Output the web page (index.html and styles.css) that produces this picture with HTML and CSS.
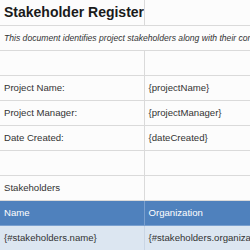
FILE: index.html
```html
<!DOCTYPE html>
<html>
<head>
<meta charset="utf-8">
<link rel="stylesheet" href="styles.css">
</head>
<body>
<table class="sheet">
  <colgroup><col class="c1"><col class="c2"></colgroup>
  <tr class="title-row"><td class="title">Stakeholder Register</td><td></td></tr>
  <tr class="desc-row"><td colspan="2" class="desc">This document identifies project stakeholders along with their contact information and roles.</td></tr>
  <tr><td></td><td></td></tr>
  <tr><td>Project Name:</td><td>{projectName}</td></tr>
  <tr><td>Project Manager:</td><td>{projectManager}</td></tr>
  <tr><td>Date Created:</td><td>{dateCreated}</td></tr>
  <tr><td></td><td></td></tr>
  <tr><td>Stakeholders</td><td></td></tr>
  <tr class="head"><td>Name</td><td>Organization</td></tr>
  <tr class="data"><td>{#stakeholders.name}</td><td>{#stakeholders.organization}</td></tr>
</table>
</body>
</html>
```
FILE: styles.css
```css
html, body {
  margin: 0;
  padding: 0;
  background: #ffffff;
}
.sheet {
  border-collapse: collapse;
  table-layout: fixed;
  width: 400px;
  font-family: "Liberation Sans", Arial, sans-serif;
  font-size: 9.6px;
  color: #333333;
}
.c1 { width: 144px; }
.c2 { width: 256px; }
.sheet td {
  height: 25px;
  padding: 0 4px;
  border: 1px solid #dadada;
  white-space: nowrap;
  overflow: hidden;
  box-sizing: border-box;
  background: #fcfcfc;
}
.sheet tr:first-child td { border-top: none; }
.sheet td:first-child { border-left: none; }
.title {
  font-size: 14px;
  font-weight: bold;
  color: #1a1a1a;
}
.desc {
  font-size: 8.6px;
  font-style: italic;
  color: #333333;
  background: #f5f5f5;
}
.head td {
  background: #4f81bd;
  color: #ffffff;
  border-color: #7aa0cf;
}
.data td {
  background: #dce6f1;
  border-color: #c9d5e4;
}
```
